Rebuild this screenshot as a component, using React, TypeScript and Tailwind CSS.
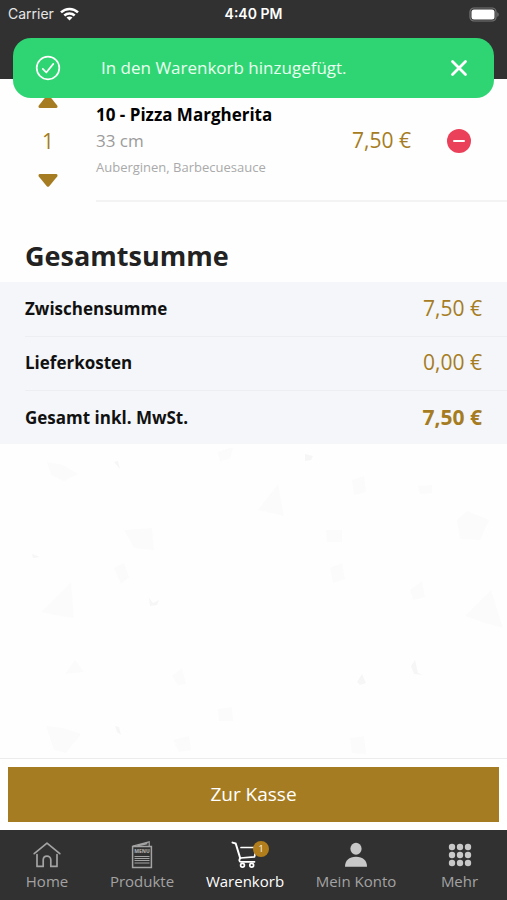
import React, { useState } from "react";

interface TotalRow {
  label: string;
  value: string;
  strong?: boolean;
}

const totals: TotalRow[] = [
  { label: "Zwischensumme", value: "7,50 €" },
  { label: "Lieferkosten", value: "0,00 €" },
  { label: "Gesamt inkl. MwSt.", value: "7,50 €", strong: true },
];

function HomeIcon() {
  return (
    <svg width="28" height="28" viewBox="0 0 28 28" fill="none" stroke="currentColor" strokeWidth="1.7" strokeLinejoin="round" strokeLinecap="round" aria-hidden="true">
      <path d="M1.2 12.6 14 2.2l12.8 10.4" />
      <path d="M4 13.5v11.9h6.2v-6.3c0-5.4 7.6-5.4 7.6 0v6.3h6.2V13.5" />
    </svg>
  );
}

function MenuCardIcon() {
  return (
    <svg width="28" height="28" viewBox="0 0 28 28" fill="none" stroke="currentColor" aria-hidden="true">
      <path d="M4.6 5.5h18.8v21H4.6z" strokeWidth="1.5" />
      <path d="M4.8 5.2 21.2.9v4.4M9.5 5l10-2.3" strokeWidth="1.2" />
      <path d="M6.5 15.5h15M6.5 17.5h15M6.5 19.5h15M6.5 22h15" strokeWidth="1.1" />
      <text x="14" y="12.2" textAnchor="middle" fontSize="5" fontWeight="800" fill="currentColor" stroke="none">
        MENU
      </text>
    </svg>
  );
}

function CartIcon() {
  return (
    <svg width="28" height="28" viewBox="0 0 28 28" fill="none" stroke="currentColor" strokeWidth="2" strokeLinecap="round" strokeLinejoin="round" aria-hidden="true">
      <path d="M1.5 1.6 4.7 2.5 9.3 17.5" />
      <path d="M10 6.5h15.5l-2 9.3-14.2 1.2" strokeWidth="1.7" />
      <path d="M9.3 17.2c-1.5.8-1.5 3.6.7 3.6h13.5" strokeWidth="1.7" />
      <circle cx="11.5" cy="24.3" r="1.9" strokeWidth="1.7" />
      <circle cx="20.7" cy="24.3" r="1.9" strokeWidth="1.7" />
    </svg>
  );
}

function PersonIcon() {
  return (
    <svg width="28" height="28" viewBox="0 0 28 28" fill="currentColor" aria-hidden="true">
      <ellipse cx="14" cy="7.8" rx="5.6" ry="6" />
      <path d="M3 25.8c0-6.3 4-10 11-10s11 3.7 11 10z" />
    </svg>
  );
}

function DotsIcon() {
  const steps = [6, 14, 22];
  return (
    <svg width="28" height="28" viewBox="0 0 28 28" fill="currentColor" aria-hidden="true">
      {steps.map((y) => steps.map((x) => <circle key={`${x}-${y}`} cx={x} cy={y} r="3.2" />))}
    </svg>
  );
}

function StatusBar() {
  return (
    <div className="grid h-7 grid-cols-3 items-center px-2 font-['Inter','Liberation_Sans',sans-serif] text-sm text-white">
      <div className="flex items-center gap-1.5">
        <span className="text-[#e6e6e6]">Carrier</span>
        <svg width="19" height="14" viewBox="0 0 19 14" fill="none" stroke="currentColor" strokeWidth="2.5" aria-hidden="true">
          <path d="M1 5.4c4.8-4.6 12.2-4.6 17 0" />
          <path d="M4.3 8.5c3-2.8 7.4-2.8 10.4 0" />
          <path d="M9.5 13.6 6.5 10.6c1.7-1.6 4.3-1.6 6 0z" fill="currentColor" stroke="none" />
        </svg>
      </div>
      <span className="text-center font-semibold">4:40 PM</span>
      <svg className="justify-self-end" width="31" height="15" viewBox="0 0 31 15" aria-hidden="true">
        <rect x="2" y="1" width="26" height="13" rx="4" fill="none" stroke="#777" strokeWidth="1.2" />
        <rect x="3.5" y="2.5" width="23" height="10" rx="2.5" fill="#fff" />
        <path d="M29.3 5.2c1.8.6 1.8 4 0 4.6z" fill="#777" />
      </svg>
    </div>
  );
}

function Toast({ onClose }: { onClose: () => void }) {
  return (
    <div role="status" className="absolute inset-x-[13px] top-[38px] flex h-[60px] items-center rounded-[18px] bg-[#2fd573] text-white">
      <svg className="ml-[22px] shrink-0" width="26" height="26" viewBox="0 0 26 26" fill="none" stroke="currentColor" strokeWidth="1.7" strokeLinecap="round" strokeLinejoin="round" aria-hidden="true">
        <circle cx="13" cy="13" r="11.3" />
        <path d="m7.8 13.8 3.5 3.7 7-8.6" />
      </svg>
      <p className="ml-10 flex-1 text-[17px] text-[#eafff1]">In den Warenkorb hinzugefügt.</p>
      <button type="button" aria-label="Schließen" onClick={onClose} className="mr-[25px]">
        <svg width="20" height="20" viewBox="0 0 20 20" stroke="currentColor" strokeWidth="2.8" strokeLinecap="round" aria-hidden="true">
          <path d="m3.5 3.5 13 13M16.5 3.5l-13 13" />
        </svg>
      </button>
    </div>
  );
}

function CartItem() {
  return (
    <article className="flex">
      <div className="flex w-24 shrink-0 flex-col items-center justify-center gap-5 text-[#a67c22]">
        <button type="button" aria-label="Mehr">
          <svg width="20" height="13" viewBox="0 0 20 13" fill="currentColor" aria-hidden="true">
            <path d="M8.2 1.2q1.8-1.8 3.6 0l7.4 9.3q1 2.5-1.2 2.5H2Q-.2 13 .8 10.5z" />
          </svg>
        </button>
        <span className="text-[21px] leading-[26px]">1</span>
        <button type="button" aria-label="Weniger">
          <svg width="20" height="13" viewBox="0 0 20 13" fill="currentColor" aria-hidden="true">
            <path d="M8.8 12.2q1.2 1.2 2.4 0l8-9.7Q20.2 0 18 0H2Q-.2 0 .8 2.5z" />
          </svg>
        </button>
      </div>
      <div className="flex flex-1 items-center border-b-2 border-[#f3f3f3] pt-[23px] pb-5">
        <div className="flex-1">
          <h2 className="text-[17px] leading-[26px] font-bold text-black">10 - Pizza Margherita</h2>
          <p className="text-[17px] leading-[26px] text-[#9b9b9b]">33 cm</p>
          <p className="text-[13px] leading-[26px] text-[#aaa]">Auberginen, Barbecuesauce</p>
        </div>
        <span className="text-[21px] text-[#a67c22]">7,50 €</span>
        <div className="flex w-24 justify-center">
          <button type="button" aria-label="Entfernen" className="flex size-6 items-center justify-center rounded-full bg-[#eb4059]">
            <span className="h-0.5 w-3 rounded-full bg-white" />
          </button>
        </div>
      </div>
    </article>
  );
}

// faint crumbs scattered over the empty part of the page
function Crumbs() {
  return (
    <svg className="w-full" viewBox="0 0 507 312" fill="#fbfbfb" aria-hidden="true">
      <path d="M47 18l16 3 15 9-14 7-13-6zM41 168l30-30 3 36-14-2zM258 66l20-26 6 32zM457 76l10-9 22 9-9 20-20-1zM465 172l26-26 12 38-18-5zM124 86l28-2 2 22-20-2zM46 282l17 2 18 6-15 19-12-3z" />
      <path d="M352 36l12-4 2 16-12 3zM418 42l14-1v8l-12 1zM330 124l12-5 3 16-12 4zM410 146l12-9 3 16-12 3zM326 86h16v12h-15zM65 230l10-14 9 12zM172 232l10-8 4 16-8 1zM218 8l15-5-3 12-10 2zM218 265l14-2 1 14h-14zM114 124l10-5 5 14-8 7zM350 294l14-2 2 18-14-1zM173 296l16-4 2 14-12 2z" />
      <g fill="#f6f6f6">
        <path d="M357 238l5-8 4 9-6 2zM149 154l4 5 6-3-2 5-7 1zM114 18l4-1 2 8zM305 10l8 2-2 4-6 1zM32 110l8 3-7 1zM411 222l4-6 3 13 5 2-9-1zM115 282l4 1 2 8-4-3z" />
      </g>
    </svg>
  );
}

const navItems = [
  { label: "Home", icon: <HomeIcon /> },
  { label: "Produkte", icon: <MenuCardIcon /> },
  { label: "Warenkorb", icon: <CartIcon />, active: true, badge: 1 },
  { label: "Mein Konto", icon: <PersonIcon />, solid: true },
  { label: "Mehr", icon: <DotsIcon />, solid: true },
];

function BottomNav() {
  return (
    <nav className="grid h-[70px] grid-cols-[94fr_96fr_110fr_112fr_95fr] bg-[#313131]">
      {navItems.map((item) => (
        <a
          key={item.label}
          href="#"
          aria-current={item.active ? "page" : undefined}
          className={`flex flex-col items-center pt-[11px] text-[15px] leading-6 ${item.active ? "text-white" : "text-[#a3a3a3]"}`}
        >
          <span className={`relative ${item.solid ? "text-[#c8c8c8]" : ""}`}>
            {item.icon}
            {item.badge && (
              <span className="absolute top-0 -right-2.5 flex size-4 items-center justify-center rounded-full bg-[#b17e1b] text-[9px] text-white">
                {item.badge}
              </span>
            )}
          </span>
          {item.label}
        </a>
      ))}
    </nav>
  );
}

export default function App() {
  const [toastOpen, setToastOpen] = useState(true);

  return (
    <div className="relative flex min-h-screen flex-col bg-[#fefefe] font-['Open_Sans','Noto_Sans',sans-serif]">
      <header className="h-[79px] bg-[#313131]">
        <StatusBar />
      </header>
      {toastOpen && <Toast onClose={() => setToastOpen(false)} />}

      <main className="flex-1">
        <CartItem />
        <h1 className="px-[25px] pt-9 pb-2 text-[27px] leading-9 font-bold text-[#222]">Gesamtsumme</h1>
        <div className="bg-[#f4f6f9] pl-[25px]">
          <table className="w-full">
            <tbody>
              {totals.map((row) => (
                <tr key={row.label} className="h-[54px] border-b border-[#eceef1] last:border-b-0">
                  <th scope="row" className="text-left text-[17px] font-bold text-[#111]">
                    {row.label}
                  </th>
                  <td className={`pr-[25px] text-right text-[21px] text-[#a67c22] ${row.strong ? "font-bold" : ""}`}>
                    {row.value}
                  </td>
                </tr>
              ))}
            </tbody>
          </table>
        </div>
        <Crumbs />
      </main>

      <div className="border-t border-[#ececec] bg-white p-2">
        <button type="button" className="h-[55px] w-full bg-[#a67c22] text-[19px] text-white">
          Zur Kasse
        </button>
      </div>
      <BottomNav />
    </div>
  );
}
